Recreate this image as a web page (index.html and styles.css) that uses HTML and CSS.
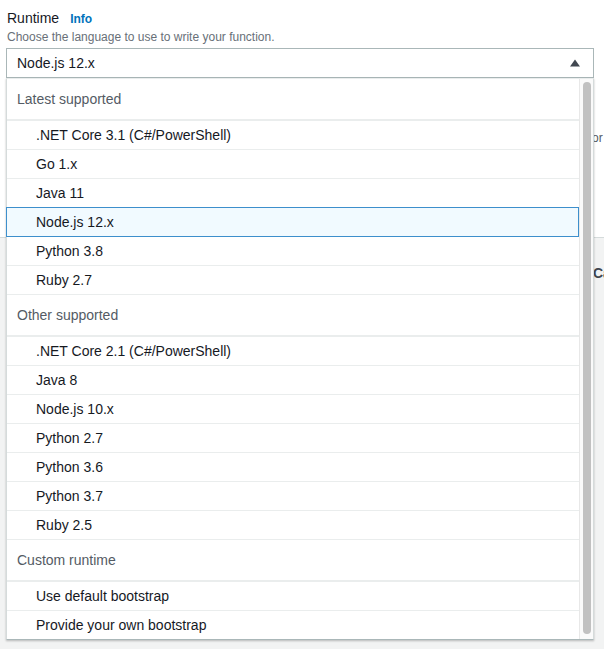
FILE: index.html
```html
<!DOCTYPE html>
<html lang="en">
<head>
<meta charset="utf-8">
<title>Runtime</title>
<link rel="stylesheet" href="styles.css">
</head>
<body>
<div class="page">
  <section class="top">
    <div class="field">
      <div class="label">Runtime<a class="info">Info</a></div>
      <div class="desc">Choose the language to use to write your function.</div>
      <div class="select-wrap">
        <div class="select">
          <span class="value">Node.js 12.x</span>
          <svg class="caret" width="10" height="8" viewBox="0 0 10 8"><polygon points="5,0.5 10,7.5 0,7.5" fill="#414750"/></svg>
        </div>
        <div class="dropdown">
          <ul class="list">
            <li class="group">Latest supported</li>
            <li class="item">.NET Core 3.1 (C#/PowerShell)</li>
            <li class="item">Go 1.x</li>
            <li class="item">Java 11</li>
            <li class="item selected">Node.js 12.x</li>
            <li class="item">Python 3.8</li>
            <li class="item">Ruby 2.7</li>
            <li class="group">Other supported</li>
            <li class="item">.NET Core 2.1 (C#/PowerShell)</li>
            <li class="item">Java 8</li>
            <li class="item">Node.js 10.x</li>
            <li class="item">Python 2.7</li>
            <li class="item">Python 3.6</li>
            <li class="item">Python 3.7</li>
            <li class="item">Ruby 2.5</li>
            <li class="group">Custom runtime</li>
            <li class="item">Use default bootstrap</li>
            <li class="item last">Provide your own bootstrap</li>
          </ul>
          <div class="track"><div class="thumb"></div></div>
        </div>
      </div>
    </div>
    <div class="peek">or</div>
  </section>
  <section class="bottom">
    <div class="peek-bold">Ca</div>
  </section>
</div>
</body>
</html>
```

FILE: styles.css
```css
html, body {
  margin: 0;
  padding: 0;
  width: 604px;
  height: 649px;
  overflow: hidden;
}
body {
  font-family: "Liberation Sans", Arial, sans-serif;
  color: #16191f;
  background: #f2f3f3;
}
.page {
  display: flex;
  flex-direction: column;
  height: 649px;
}
.top {
  background: #ffffff;
  border-bottom: 1px solid #d5dbdb;
  padding-top: 8px;
  box-sizing: border-box;
  height: 238px;
  white-space: nowrap;
}
.field {
  padding-left: 6px;
  width: 588px;
}
.label {
  font-size: 14px;
  line-height: 20px;
  padding-left: 1px;
  color: #16191f;
}
.info {
  font-size: 12px;
  font-weight: bold;
  color: #0073bb;
  margin-left: 11px;
}
.desc {
  font-size: 12px;
  line-height: 16px;
  color: #687078;
  padding-left: 1px;
  margin-bottom: 3px;
}
.select-wrap {
  position: relative;
}
.select {
  height: 28px;
  border: 1px solid #aab7b8;
  display: flex;
  align-items: center;
  justify-content: space-between;
  padding: 0 13px 0 10px;
}
.value {
  font-size: 14px;
  line-height: 28px;
}
.caret {
  display: block;
  margin-top: -1px;
}
.dropdown {
  position: absolute;
  top: 100%;
  left: 0;
  width: 588px;
  box-sizing: border-box;
  background: #ffffff;
  border: 1px solid #d5dbdb;
  border-top-color: #eaeded;
  border-bottom-color: #aab7b8;
  box-shadow: 0 1px 2px rgba(0, 0, 0, 0.25);
  display: flex;
  z-index: 10;
}
.list {
  list-style: none;
  margin: 0;
  padding: 0;
  flex: 1;
}
.group {
  height: 40px;
  line-height: 40px;
  font-size: 14px;
  color: #545b64;
  padding-left: 10px;
  border-bottom: 2px solid #eaeded;
}
.item {
  height: 28px;
  line-height: 28px;
  font-size: 14px;
  color: #16191f;
  padding-left: 29px;
  border-bottom: 1px solid #eaeded;
}
.item.last {
  border-bottom: none;
}
.item.selected {
  background: #f1faff;
  border: 1px solid #3d8fcc;
  margin: -1px 0 0 -1px;
}
.track {
  border-left: 1px solid #e8e8e8;
  background: #fafafa;
  padding: 3px 2px 5px 3px;
  box-sizing: border-box;
  display: flex;
  width: 14px;
}
.thumb {
  flex: 1;
  background: #c1c1c1;
  border-radius: 4px;
}
.peek {
  font-size: 12px;
  line-height: 16px;
  color: #545b64;
  padding-left: 592px;
  margin-top: 52px;
}
.bottom {
  flex: 1;
  background: #f2f3f3;
  padding-top: 25px;
  white-space: nowrap;
}
.peek-bold {
  font-size: 14px;
  font-weight: bold;
  line-height: 20px;
  color: #414750;
  padding-left: 593px;
}
```
